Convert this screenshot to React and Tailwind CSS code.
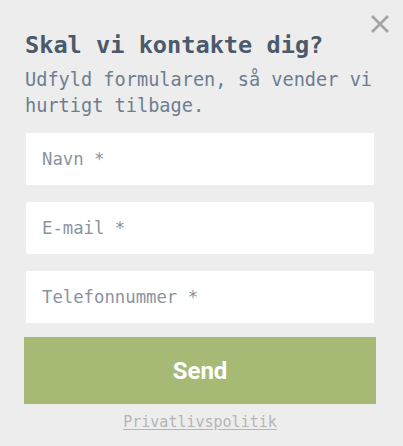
import React from 'react'

const FIELDS = ['Navn *', 'E-mail *', 'Telefonnummer *']

const mono = { fontFamily: '"DejaVu Sans Mono", "Liberation Mono", monospace' }

export default function App() {
    return (
        <div className="relative w-[403px] h-[446px] bg-[#ededed] overflow-hidden">
            {/* close */}
            <button className="absolute left-[370px] top-[14px] w-[20px] h-[20px] text-[#a3a3a3]">
                <svg viewBox="0 0 20 20" width="20" height="20" fill="none" stroke="currentColor" strokeWidth="2.6">
                    <path d="M2 2 L18 18 M18 2 L2 18" />
                </svg>
            </button>

            <div className="flex flex-col pl-[24px] w-[376px]">
                <h2
                    className="mt-[31px] ml-[1px] text-[23.6px] leading-[28px] font-bold text-[#4b5a6a] whitespace-nowrap"
                    style={mono}
                >
                    Skal vi kontakte dig?
                </h2>
                <p
                    className="mt-[8px] ml-[1px] text-[18.6px] leading-[26px] text-[#6b7e92] whitespace-nowrap"
                    style={mono}
                >
                    Udfyld formularen, så vender vi
                    <br />
                    hurtigt tilbage.
                </p>

                <form className="mt-[14px] flex flex-col">
                    <div className="flex flex-col gap-[17px] px-[2px]">
                        {FIELDS.map((f) => (
                            <input
                                key={f}
                                placeholder={f}
                                className="h-[52px] w-full bg-white pl-[16px] text-[17.3px] text-[#4b5a6a] placeholder:text-[#8a93a0] outline-none"
                                style={mono}
                            />
                        ))}
                    </div>
                    <button
                        type="button"
                        className="mt-[14px] h-[67px] w-full bg-[#a6ba75] text-white text-[24px] font-bold"
                        style={{ fontFamily: 'Roboto, "Liberation Sans", sans-serif' }}
                    >
                        Send
                    </button>
                    <a
                        href="#"
                        className="mt-[8px] self-center text-[15px] leading-[20px] text-[#b5b5b5] underline underline-offset-[2px]"
                        style={mono}
                    >
                        Privatlivspolitik
                    </a>
                </form>
            </div>
        </div>
    )
}
